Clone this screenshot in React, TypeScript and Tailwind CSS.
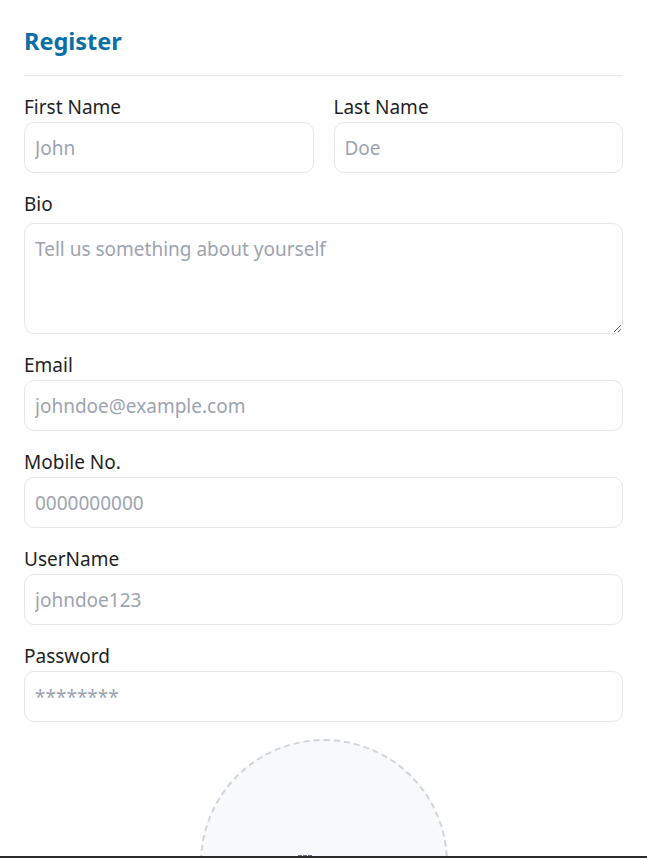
import React from "react";

function Label({ children, className = "mb-[4px]" }: { children: React.ReactNode; className?: string }) {
  return <label className={`${className} text-[19px] leading-[22px] text-[#1f1f1f]`}>{children}</label>;
}

function Field({ label, placeholder, type = "text" }: { label: string; placeholder: string; type?: string }) {
  return (
    <div className="flex flex-col">
      <Label>{label}</Label>
      <input
        type={type}
        placeholder={placeholder}
        className="h-[51px] w-full rounded-[10px] border border-[#e5e7eb] bg-white px-[10px] text-[19px] text-[#222] placeholder:text-[#9ca3af] outline-none"
      />
    </div>
  );
}

export default function App() {
  return (
    <div
      className="relative h-[858px] w-full overflow-hidden bg-white"
      style={{ fontFamily: '"Noto Sans", "Open Sans", sans-serif' }}
    >
      <div className="px-[24px] pt-[25px]">
        <div className="border-b border-[#e5e7eb] pb-[18px]">
          <h1 className="text-[23.5px] font-bold leading-[32px] text-[#0a6fa6]">Register</h1>
        </div>
        <div className="mt-[20px] flex flex-col gap-[20px]">
          <div className="grid grid-cols-2 gap-[20px]">
            <Field label="First Name" placeholder="John" />
            <Field label="Last Name" placeholder="Doe" />
          </div>
          <div className="flex flex-col">
            <Label className="mb-[8px]">Bio</Label>
            <textarea
              placeholder="Tell us something about yourself"
              className="h-[111px] w-full rounded-[10px] border border-[#e5e7eb] bg-white px-[10px] pb-[10px] pt-[12px] text-[19px] leading-[26px] text-[#222] placeholder:text-[#9ca3af] outline-none"
            />
          </div>
          <Field label="Email" placeholder="johndoe@example.com" type="email" />
          <Field label="Mobile No." placeholder="0000000000" />
          <Field label="UserName" placeholder="johndoe123" />
          <Field label="Password" placeholder="********" type="password" />
        </div>
        <div className="mt-[17px] flex justify-center">
          <div className="relative h-[248px] w-[248px] rounded-full border-2 border-dashed border-[#d1d5db] bg-[#f8f9fa]">
            <div className="absolute left-[96px] top-[114px] flex gap-[1px]">
              <span className="h-[4px] w-[4px] bg-[#6b7280]" />
              <span className="h-[4px] w-[4px] bg-[#6b7280]" />
              <span className="h-[4px] w-[4px] bg-[#6b7280]" />
            </div>
          </div>
        </div>
      </div>
      <div className="absolute bottom-0 left-0 right-0 h-[2px] bg-[#2b2b2b]" />
    </div>
  );
}
